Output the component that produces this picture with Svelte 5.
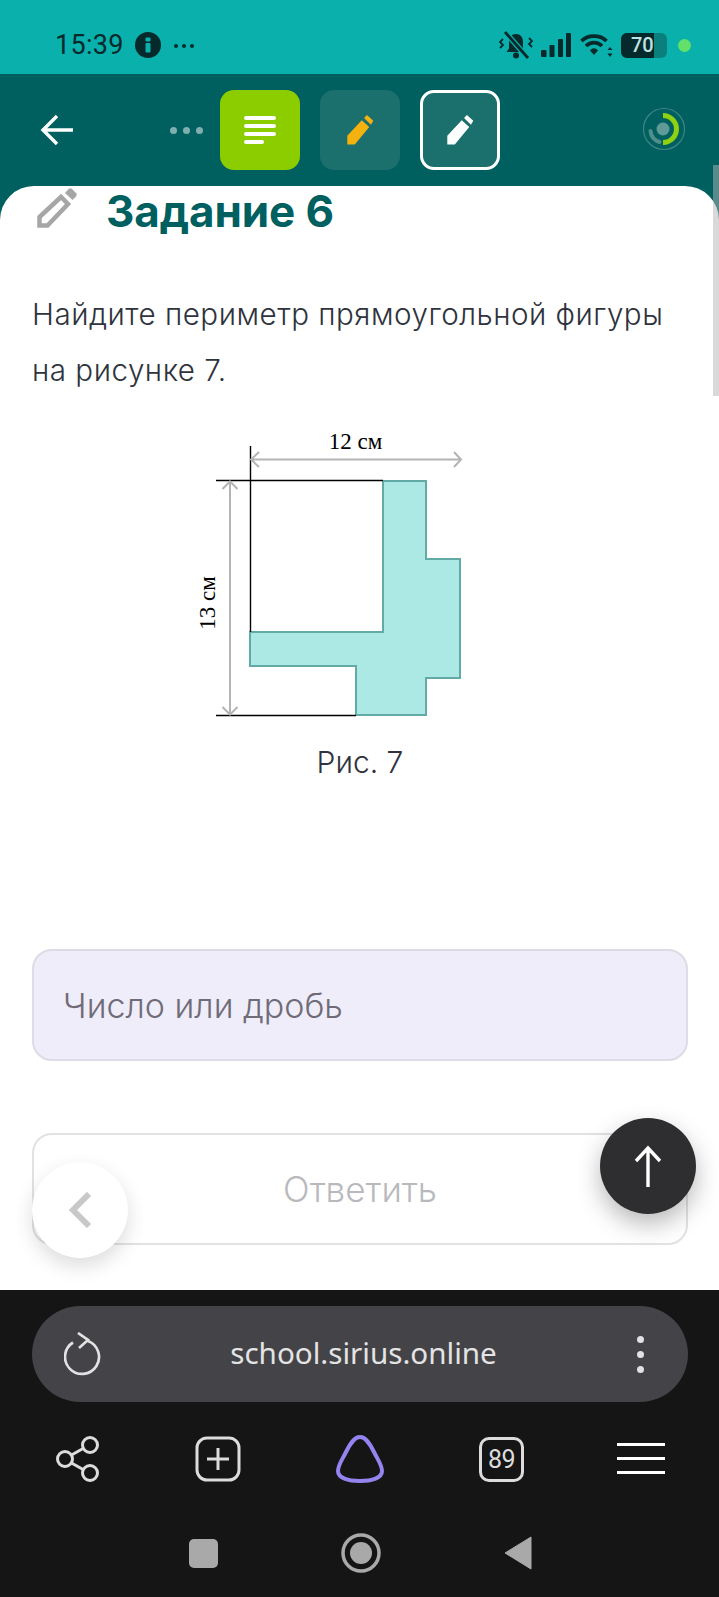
<script>
  // Task screen: phone status bar, step tabs, question card, browser bar.
  const tabs = [
    { kind: 'text' },
    { kind: 'edit', ink: '#f4b20f' },
    { kind: 'edit', ink: '#ffffff', current: true }
  ];
  const pencil = 'M2 24.5 L2 17 L14.5 3.5 L21 9.5 L8.5 24.5 Z M16.5 1.5 L19 -1 L24.5 4 L22.5 7.5 Z';
</script>

<div class="screen">
  <div class="status">
    <span class="clock">15:39</span>
    <svg class="info" width="26" height="26" viewBox="0 0 26 26">
      <circle cx="13" cy="13" r="13" fill="#06292c" />
      <rect x="10.5" y="5.5" width="5" height="4" rx="1" fill="#09b0ac" />
      <rect x="10.5" y="11" width="5" height="9.5" rx="1" fill="#09b0ac" />
    </svg>
    <span class="more">
      <i></i><i></i><i></i>
    </span>
    <div class="status__right">
      <svg width="34" height="28" viewBox="0 0 34 28" fill="none">
        <path d="M17 3c-4.500 0-7 3.500-7 7.500v7L7.500 21h19L24 17.500v-7C24 6.500 21.500 3 17 3z" fill="#06292c" />
        <circle cx="17" cy="24.500" r="3" fill="#06292c" />
        <path d="M6 1 L29 27" stroke="#09b0ac" stroke-width="5.500" />
        <path d="M6 1 L29 27" stroke="#06292c" stroke-width="2.800" />
        <path d="M4 8l-3 3 3 3-3 3M30 7l3 3-3 3 3 3" stroke="#06292c" stroke-width="1.800" />
      </svg>
      <svg class="sig" width="30" height="26" viewBox="0 0 30 26">
        <rect x="0" y="18" width="5.500" height="7" rx="1" fill="#06292c" />
        <rect x="8.500" y="13" width="5" height="12" rx="1" fill="#06292c" />
        <rect x="17" y="7" width="5" height="18" rx="1" fill="#06292c" />
        <rect x="25" y="1" width="5" height="24" rx="1" fill="#06292c" />
      </svg>
      <svg class="wifi" width="34" height="26" viewBox="0 0 34 26" fill="none">
        <path d="M1.500 9C8 2.500 20 2.500 26.500 9M6 14c4.500-4.500 11.500-4.500 16 0" stroke="#06292c" stroke-width="3.600" />
        <path d="M10 18.500c2.500-3 5.500-3 8 0L14 23z" fill="#06292c" />
        <path d="M30 15l-2.500 3h5zM30 25l-2.500-3.500h5z" fill="#06292c" />
      </svg>
      <span class="battery"><span class="battery__fill"></span><b>70</b></span>
      <span class="led"></span>
    </div>
  </div>

  <header class="head">
    <svg class="back" width="34" height="32" viewBox="0 0 34 32" fill="none">
      <path d="M33 16H3M17 2L3 16l14 14" stroke="#fff" stroke-width="3.400" />
    </svg>
    <span class="dots"><i></i><i></i><i></i></span>
    <div class="tabs">
      <span class="tab tab--text">
        <svg width="32" height="30" viewBox="0 0 32 30">
          <rect y="1" width="32" height="4" rx="2" fill="#fff" />
          <rect y="9" width="32" height="4" rx="2" fill="#fff" />
          <rect y="17" width="32" height="4" rx="2" fill="#fff" />
          <rect y="25" width="20" height="4" rx="2" fill="#fff" />
        </svg>
      </span>
      {#each tabs.slice(1) as tab}
        <span class="tab" class:tab--current={tab.current}>
          <svg width="30" height="30" viewBox="0 -1 26 26"><path d={pencil} fill={tab.ink} /></svg>
        </span>
      {/each}
    </div>
    <svg class="ring" width="44" height="44" viewBox="0 0 44 44" fill="none">
      <circle cx="22" cy="22" r="20.500" stroke="#3f8583" stroke-width="1.200" />
      <circle cx="21" cy="22" r="6.500" fill="#5f9a98" />
      <path d="M21 8.500a13.500 13.500 0 0 1 0 27" stroke="#8fd010" stroke-width="5" />
      <path d="M8.500 24a13 13 0 0 0 9 11" stroke="#4f8e8c" stroke-width="4" stroke-linecap="round" />
    </svg>
  </header>

  <main class="card">
    <div class="title">
      <svg class="title__icon" width="40" height="40" viewBox="0 0 40 40" fill="none">
        <path d="M2.500 37.500V29L24 9l7 7L10.500 37.500z" stroke="#a6a6a6" stroke-width="4.500" fill="none" />
        <path d="M28 5l4-4.500h2.500l5 5V8l-4 4z" fill="#a6a6a6" />
      </svg>
      <h1>Задание 6</h1>
    </div>
    <p class="question">Найдите периметр прямоугольной фигуры на рисунке 7.</p>

    <figure class="fig">
      <svg width="300" height="300" viewBox="0 0 300 300" fill="none">
        <g transform="translate(-180 -430)">
          <path d="M383 481H426V559H460V678H426V715H356V666H250V632H383Z" fill="#ace8e4" stroke="#62aaa5" stroke-width="2" />
          <path d="M250.500 446V632M216 480.500H383M216 715.500H356" stroke="#000" stroke-width="1.400" />
          <g stroke="#b4b4b4" stroke-width="2">
            <path d="M251 459.500H461M259 452L251 459.500L259 467M454 452L461 459.500L454 467" />
            <path d="M230 482V714M222.500 489L230 481.500L237.500 489M222.500 707L230 714.500L237.500 707" />
          </g>
          <text x="355.500" y="449" class="dim" text-anchor="middle">12 см</text>
          <text transform="translate(215 603) rotate(-90)" class="dim" text-anchor="middle">13 см</text>
        </g>
      </svg>
      <figcaption>Рис. 7</figcaption>
    </figure>

    <div class="answer">
      <div class="field">Число или дробь</div>
      <button type="button" class="submit">Ответить</button>
    </div>

    <button type="button" class="fab fab--prev" aria-label="Назад">
      <svg width="26" height="36" viewBox="0 0 26 36" fill="none"><path d="M22 2L6 18l16 16" stroke="#c8c8c8" stroke-width="6" /></svg>
    </button>
    <button type="button" class="fab fab--up" aria-label="Наверх">
      <svg width="28" height="42" viewBox="0 0 28 42" fill="none"><path d="M14 42V3M2 16L14 3l12 13" stroke="#fff" stroke-width="3.400" /></svg>
    </button>
  </main>
  <span class="scrollbar"></span>

  <footer class="browser">
    <div class="url">
      <svg width="38" height="44" viewBox="0 0 38 44" fill="none">
        <path d="M9 10.500A17 17 0 1 0 24 9M14 1l10 7-9 8" stroke="#e2e2e2" stroke-width="2.700" />
      </svg>
      <span class="url__text">school.sirius.online</span>
      <span class="url__more"><i></i><i></i><i></i></span>
    </div>

    <nav class="tools">
      <svg width="46" height="46" viewBox="0 0 46 46" fill="none" stroke="#dcdcdc" stroke-width="3">
        <circle cx="35" cy="9" r="7.500" /><circle cx="10" cy="23" r="7.500" /><circle cx="35" cy="37" r="7.500" />
        <path d="M16.500 19L29 12M16.500 27L29 34" />
      </svg>
      <svg class="tools__add" width="46" height="46" viewBox="0 0 46 46" fill="none" stroke="#dcdcdc" stroke-width="3">
        <rect x="2" y="2" width="42" height="42" rx="10" />
        <path d="M23 12V34M12 23H34" />
      </svg>
      <svg class="alice" width="52" height="50" viewBox="0 0 52 50" fill="none">
        <path d="M26 3C32 3 36 10 40 18C44 26 48 31 48 37C48 44 38 47 26 47C14 47 4 44 4 37C4 31 8 26 12 18C16 10 20 3 26 3Z" stroke="#9384f0" stroke-width="4" />
      </svg>
      <span class="count">89</span>
      <svg width="50" height="34" viewBox="0 0 50 34" fill="#fff">
        <rect y="1" width="48" height="3" /><rect y="15" width="48" height="3" /><rect y="29" width="48" height="3" />
      </svg>
    </nav>

    <div class="sysnav">
      <span class="sq"></span>
      <svg width="42" height="42" viewBox="0 0 42 42" fill="none">
        <circle cx="21" cy="21" r="18" stroke="#a9a9a9" stroke-width="3.500" />
        <circle cx="21" cy="21" r="11" fill="#a9a9a9" />
      </svg>
      <svg width="28" height="34" viewBox="0 0 28 34"><path d="M27 1V33L1 17Z" fill="#a9a9a9" stroke="#a9a9a9" stroke-linejoin="round" /></svg>
    </div>
  </footer>
</div>

<style>
  :global(body) { margin: 0; background: #151516; }

  .screen {
    position: relative;
    width: 719px;
    height: 1597px;
    display: flex;
    flex-direction: column;
    overflow: hidden;
    font-family: Roboto, "Noto Sans", sans-serif;
    background: #00605f;
  }

  /* status bar */
  .status {
    height: 74px;
    flex: none;
    box-sizing: border-box;
    padding: 31px 28px 0 55px;
    display: flex;
    align-items: flex-start;
    background: #09b0ac;
    color: #06292c;
  }
  .clock { font-size: 27px; line-height: 28px; letter-spacing: 0.3px; }
  .info { margin: 1px 0 0 11px; }
  .more { display: inline-flex; gap: 4px; margin: 13px 0 0 13px; }
  .more i { width: 4px; height: 4px; border-radius: 50%; background: #06292c; }
  .status__right { margin-left: auto; display: flex; align-items: center; height: 28px; }
  .sig { margin-left: 8px; }
  .wifi { margin-left: 9px; }
  .battery {
    position: relative;
    width: 46px;
    height: 25px;
    margin-left: 7px;
    border-radius: 6px;
    background: #0a7f7d;
    overflow: hidden;
    display: flex;
    align-items: center;
    justify-content: flex-start;
  }
  .battery__fill { position: absolute; inset: 0 13px 0 0; background: #06292c; }
  .battery b { position: relative; margin-left: 10px; font-size: 20px; font-weight: 500; color: #bfe3e0; }
  .led { width: 13px; height: 13px; margin-left: 11px; border-radius: 50%; background: #62e06a; }

  /* header */
  .head {
    height: 112px;
    flex: none;
    box-sizing: border-box;
    padding: 16px 33px 16px 40px;
    display: flex;
    align-items: flex-start;
  }
  .back { margin-top: 24px; }
  .dots { display: flex; gap: 6px; margin: 37px 0 0 96px; }
  .dots i { width: 7px; height: 7px; border-radius: 50%; background: #7fb0af; }
  .tabs { display: flex; gap: 20px; margin-left: 17px; }
  .tab {
    width: 80px;
    height: 80px;
    box-sizing: border-box;
    border-radius: 14px;
    display: flex;
    align-items: center;
    justify-content: center;
    background: #1b6f6d;
  }
  .tab--text { background: #8ccd00; }
  .tab--current { border: 3px solid #fff; }
  .ring { margin: 17px 0 0 auto; }

  /* question card */
  .card {
    position: relative;
    flex: 1;
    box-sizing: border-box;
    padding: 0 31px 0 32px;
    background: #fff;
    border-radius: 34px 34px 0 0;
  }
  .title { display: flex; align-items: flex-start; height: 54px; }
  .title__icon { margin: 2px 0 0 5px; }
  h1 {
    margin: 0 0 0 29px;
    font-size: 44px;
    line-height: 50px;
    font-weight: 700;
    font-family: Inter, sans-serif;
    color: #00605f;
    letter-spacing: -0.1px;
  }
  .question {
    margin: 46px 0 0;
    font-family: Inter, sans-serif;
    font-size: 29.600px;
    line-height: 56px;
    font-weight: 300;
    color: #2f333d;
    letter-spacing: 0.5px;
  }
  .fig { margin: 32px 0 0; display: flex; flex-direction: column; align-items: center; }
  .fig svg { margin-left: -60px; display: block; }
  .dim { font-family: "Liberation Serif", serif; font-size: 23px; fill: #000; }
  figcaption {
    margin: 14px 0 0 0;
    font-family: Inter, sans-serif;
    font-size: 30px;
    line-height: 36px;
    font-weight: 300;
    color: #2f333d;
  }
  .answer { margin-top: 169px; display: flex; flex-direction: column; gap: 72px; }
  .field, .submit {
    height: 112px;
    box-sizing: border-box;
    border-radius: 20px;
    font-family: Inter, sans-serif;
    font-size: 34px;
    font-weight: 300;
  }
  .field {
    padding: 0 29px;
    display: flex;
    align-items: center;
    background: #efedfa;
    border: 2px solid #dcdce6;
    color: #6f6c78;
  }
  .submit {
    width: 100%;
    background: #fff;
    border: 2px solid #e2e2e2;
    color: #b9b9bd;
    font-size: 35px;
  }
  .fab {
    position: absolute;
    width: 96px;
    height: 96px;
    padding: 0;
    border: 0;
    border-radius: 50%;
    display: flex;
    align-items: center;
    justify-content: center;
  }
  .fab--prev { left: 32px; top: 976px; background: #fff; box-shadow: 0 8px 20px rgba(0, 0, 0, 0.14); }
  .fab--up { left: 600px; top: 932px; background: #2e2e30; box-shadow: 0 10px 24px rgba(0, 0, 0, 0.28); }
  .scrollbar { position: absolute; right: 0; top: 165px; width: 6px; height: 231px; background: rgba(180, 180, 180, 0.5); }

  /* browser bar */
  .browser { height: 307px; flex: none; box-sizing: border-box; padding: 16px 31px 0 32px; background: #151516; }
  .url {
    height: 96px;
    box-sizing: border-box;
    padding: 0 44px 0 32px;
    display: flex;
    align-items: center;
    border-radius: 48px;
    background: #434348;
  }
  .url__text { flex: 1; margin-right: 12px; padding-bottom: 4px; text-align: center; font-family: "Noto Sans", sans-serif; font-size: 29.600px; color: #e4e4e4; }
  .url__more { display: flex; flex-direction: column; gap: 8px; }
  .url__more i { width: 7px; height: 7px; border-radius: 50%; background: #e2e2e2; }
  .tools {
    margin-top: 32px;
    display: flex;
    justify-content: space-between;
    align-items: center;
    padding: 0 21px 0 23px;
  }
  .tools__add { margin-left: 1px; }
  .count {
    width: 45px;
    height: 45px;
    box-sizing: border-box;
    border: 3px solid #dcdcdc;
    border-radius: 10px;
    display: flex;
    align-items: center;
    justify-content: center;
    font-size: 25px;
    letter-spacing: -0.5px;
    color: #dcdcdc;
  }
  .sysnav { margin-top: 48px; display: flex; align-items: center; justify-content: center; gap: 122px; }
  .sq { width: 29px; height: 29px; border-radius: 5px; background: #a9a9a9; }
</style>
